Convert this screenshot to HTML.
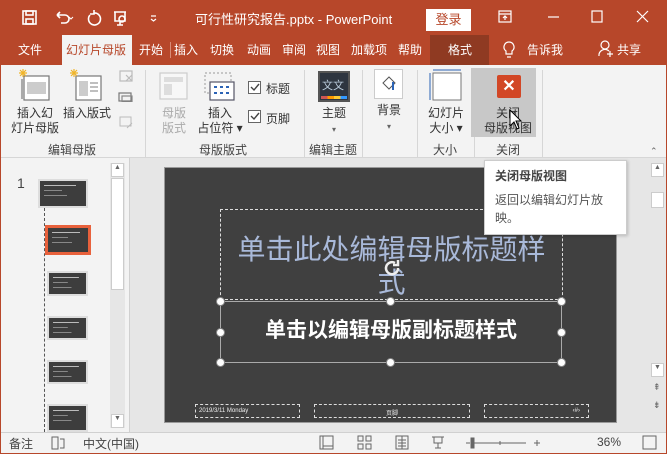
<!DOCTYPE html>
<html><head><meta charset="utf-8"><style>
*{margin:0;padding:0;box-sizing:border-box}
body{width:667px;height:454px;overflow:hidden;font-family:"Liberation Sans","Noto Sans CJK SC",sans-serif;font-size:12px;color:#333;background:#b7472a;position:relative}
.a{position:absolute}
.t{white-space:nowrap}
.w{color:#fff}
.tab{position:absolute;top:41px;color:#fff;font-size:12px}
.sep{position:absolute;top:70px;width:1px;height:88px;background:#d6d6d6}
.gl{position:absolute;top:141px;font-size:12px;color:#444;transform:translateX(-50%)}
.bt{position:absolute;font-size:12px;color:#333;text-align:center;line-height:15px;transform:translateX(-50%)}
.h{position:absolute;width:9px;height:9px;border-radius:50%;background:#fff;border:1px solid #888}
.th{position:absolute;background:#3d3d3d;border:2px solid #ddd;background-image:linear-gradient(#bbb,#bbb),linear-gradient(#888,#888),linear-gradient(#888,#888);background-size:70% 1px,40% 1px,50% 1px;background-position:4px 4px,4px 9px,4px 14px;background-repeat:no-repeat}
</style></head><body>
<svg class="a" style="left:22px;top:9px" width="140" height="18" viewBox="0 0 140 18" fill="none" stroke="#fff" stroke-width="1.6">
<rect x="1" y="2" width="13" height="13"/><rect x="4" y="2" width="7" height="4"/><rect x="4" y="10" width="7" height="5"/>
<path d="M35 6h8a4 4 0 0 1 0 8h-4M35 6l3-3M35 6l3 3"/><path d="M47 8l2 2 2-2" stroke-width="1"/>
<path d="M72 4a6 6 0 1 1-4 2M72 1v4h-4"/>
<path d="M92 3h12M93 3v9h10V3M98 12v4M95 16h6"/><circle cx="100" cy="10" r="3"/>
<path d="M129 7h5M129 10l2.5 2 2.5-2" stroke-width="1.2"/></svg>
<div class="a t w" style="left:195px;top:9px;font-size:13px">可行性研究报告.pptx - PowerPoint</div>
<div class="a t" style="left:426px;top:9px;width:45px;height:22px;background:#fff;color:#b7472a;font-size:13px;text-align:center;line-height:22px">登录</div>
<svg class="a" style="left:498px;top:9px" width="160" height="16" fill="none" stroke="#fff" stroke-width="1.2">
<rect x="1" y="2" width="12" height="11"/><path d="M1 5h12M7 7v4M5 9l2-2 2 2"/>
<path d="M50 8h11"/><rect x="94" y="2" width="10" height="11"/><path d="M139 2l11 11M150 2l-11 11"/></svg>
<div class="tab" style="left:18px">文件</div>
<div class="a" style="left:62px;top:35px;width:70px;height:30px;background:#f3f3f3"></div>
<div class="tab" style="left:66px;color:#b7472a">幻灯片母版</div>
<div class="tab" style="left:139px">开始</div><div class="tab" style="left:174px">插入</div><div class="tab" style="left:210px">切换</div><div class="tab" style="left:247px">动画</div><div class="tab" style="left:282px">审阅</div><div class="tab" style="left:316px">视图</div><div class="tab" style="left:351px">加载项</div><div class="tab" style="left:398px">帮助</div>
<div class="a" style="left:170px;top:42px;width:1px;height:16px;background:#d98c77"></div>
<div class="a" style="left:430px;top:35px;width:59px;height:30px;background:#8f3a22"></div>
<div class="tab" style="left:448px">格式</div>
<svg class="a" style="left:502px;top:40px" width="14" height="20" fill="none" stroke="#fff" stroke-width="1.2"><path d="M7 2a5 5 0 0 0-3 9v3h6v-3a5 5 0 0 0-3-9zM5 17h4"/></svg>
<div class="tab" style="left:527px">告诉我</div>
<svg class="a" style="left:598px;top:40px" width="16" height="18" fill="none" stroke="#fff" stroke-width="1.2"><circle cx="7" cy="5" r="4"/><path d="M1 16a6 6 0 0 1 10-5M12 11v6M9 14h6"/></svg>
<div class="tab" style="left:617px">共享</div>
<div class="a" style="left:1px;top:65px;width:665px;height:93px;background:#f3f3f3"></div>
<div class="a" style="left:1px;top:157px;width:665px;height:1px;background:#d6d6d6"></div>
<div class="sep" style="left:145px"></div><div class="sep" style="left:304px"></div><div class="sep" style="left:362px"></div><div class="sep" style="left:417px"></div><div class="sep" style="left:474px"></div><div class="sep" style="left:542px"></div>
<svg class="a" style="left:18px;top:68px" width="120" height="34" fill="none" stroke-width="1.2">
<rect x="6" y="8" width="25" height="24" fill="#fff" stroke="#777"/><rect x="9" y="14" width="19" height="12" fill="#ccc" stroke="none"/><rect x="3" y="11" width="2" height="20" fill="#aaa" stroke="none"/>
<path d="M5 1v8M1 5h8M2 2l6 6M8 2l-6 6" stroke="#f0b429"/>
<rect x="58" y="8" width="25" height="24" fill="#fff" stroke="#777"/><rect x="61" y="13" width="9" height="15" fill="#ccc" stroke="none"/><path d="M72 15h8M72 19h8M72 23h8" stroke="#999"/>
<path d="M56 1v8M52 5h8M53 2l6 6M59 2l-6 6" stroke="#f0b429"/>
<rect x="102" y="3" width="12" height="10" stroke="#bbb"/><path d="M108 7l6 6M114 7l-6 6" stroke="#bbb"/>
<rect x="101" y="25" width="12" height="8" stroke="#777"/><rect x="104" y="28" width="10" height="6" stroke="#888"/></svg>
<svg class="a" style="left:119px;top:116px" width="16" height="14" fill="none" stroke="#bbb"><rect x="1" y="1" width="11" height="9"/><path d="M8 12l5-5"/></svg>
<div class="bt" style="left:35px;top:106px">插入幻<br>灯片母版</div>
<div class="bt" style="left:87px;top:106px">插入版式</div>
<div class="gl" style="left:72px">编辑母版</div>
<svg class="a" style="left:158px;top:72px" width="80" height="32" fill="none" stroke-width="1.2">
<rect x="2" y="1" width="27" height="26" fill="#f7f7f7" stroke="#ccc"/><rect x="6" y="5" width="19" height="5" fill="#ddd" stroke="none"/><rect x="6" y="12" width="8" height="11" fill="#ddd" stroke="none"/>
<rect x="47" y="1" width="26" height="20" stroke="#aaa" stroke-dasharray="2 2"/><rect x="52" y="10" width="24" height="18" fill="#fff" stroke="#556"/>
<path d="M56 15h3M62 15h3M68 15h3M56 21h3M62 21h3M68 21h3" stroke="#2b63b6" stroke-width="2"/></svg>
<div class="bt" style="left:174px;top:106px;color:#aaa">母版<br>版式</div>
<div class="bt" style="left:220px;top:106px">插入<br>占位符 ▾</div>
<svg class="a" style="left:247px;top:80px" width="16" height="44" fill="#fff" stroke="#666"><rect x="1.5" y="1.5" width="12" height="12"/><rect x="1.5" y="30.5" width="12" height="12"/><path d="M4 7l3 3 5-6M4 36l3 3 5-6" fill="none" stroke="#444" stroke-width="1.4"/></svg>
<div class="a t" style="left:266px;top:80px">标题</div><div class="a t" style="left:266px;top:110px">页脚</div>
<div class="gl" style="left:223px">母版版式</div>
<div class="a" style="left:318px;top:71px;width:32px;height:31px;background:#2e3540;border:2px solid #555"></div>
<div class="a t" style="left:322px;top:77px;color:#bcd;font-size:11px">文文</div>
<div class="a" style="left:321px;top:96px;width:26px;height:3px;background:linear-gradient(90deg,#c55 25%,#f90 25% 50%,#fc3 50% 75%,#39f 75%)"></div>
<div class="bt" style="left:334px;top:106px">主题<br><span style="font-size:8px;color:#666">▾</span></div>
<div class="gl" style="left:333px">编辑主题</div>
<div class="a" style="left:374px;top:69px;width:29px;height:30px;background:#fff;border:1px solid #ccc"></div>
<svg class="a" style="left:380px;top:74px" width="18" height="20" fill="none" stroke="#555"><path d="M3 9l6-6 6 6-6 6z"/><path d="M13 8v8" stroke="#2b63b6" stroke-width="2"/></svg>
<div class="bt" style="left:389px;top:103px">背景<br><span style="font-size:8px;color:#666">▾</span></div>
<svg class="a" style="left:428px;top:68px" width="38" height="34" fill="none"><rect x="5" y="5" width="28" height="27" fill="#fff" stroke="#777"/><path d="M5 2h28M2 5v27" stroke="#2b63b6"/></svg>
<div class="bt" style="left:446px;top:106px">幻灯片<br>大小 ▾</div>
<div class="gl" style="left:445px">大小</div>
<div class="a" style="left:471px;top:68px;width:65px;height:69px;background:#c8c8c8"></div>
<div class="a" style="left:497px;top:75px;width:24px;height:23px;background:#d24726;border-radius:2px;color:#fff;font-weight:bold;font-size:16px;text-align:center;line-height:23px">✕</div>
<div class="bt" style="left:508px;top:106px">关闭<br>母版视图</div>
<svg class="a" style="left:509px;top:109px" width="14" height="22"><path d="M1 1v16l4-4 3 7 2-1-3-7h5z" fill="#fff" stroke="#000"/></svg>
<div class="gl" style="left:508px">关闭</div>
<div class="a" style="left:650px;top:146px;font-size:9px;color:#666">⌃</div>
<div class="a" style="left:1px;top:158px;width:665px;height:274px;background:#e6e6e6"></div>
<div class="a" style="left:1px;top:158px;width:128px;height:274px;background:#f3f3f3"></div>
<div class="a" style="left:129px;top:158px;width:1px;height:274px;background:#d0d0d0"></div>
<div class="a" style="left:17px;top:175px;font-size:14px;color:#444">1</div>
<div class="a" style="left:44px;top:208px;height:224px;border-left:1px dashed #555"></div>
<div class="th" style="left:38px;top:179px;width:50px;height:29px"></div>
<div class="th" style="left:45px;top:225px;width:46px;height:30px;border:3px solid #e8613c"></div>
<div class="th" style="left:47px;top:271px;width:41px;height:25px"></div>
<div class="th" style="left:47px;top:316px;width:41px;height:24px"></div>
<div class="th" style="left:47px;top:360px;width:41px;height:24px"></div>
<div class="th" style="left:47px;top:404px;width:41px;height:28px"></div>
<div class="a" style="left:110px;top:163px;width:15px;height:265px;background:#e6e6e6"></div>
<div class="a" style="left:111px;top:163px;width:13px;height:14px;background:#fff;border:1px solid #ccc;font-size:7px;text-align:center;color:#666">▲</div>
<div class="a" style="left:111px;top:178px;width:13px;height:112px;background:#fff;border:1px solid #ccc"></div>
<div class="a" style="left:111px;top:414px;width:13px;height:14px;background:#fff;border:1px solid #ccc;font-size:7px;text-align:center;color:#666">▼</div>
<div class="a" style="left:164px;top:167px;width:453px;height:256px;background:#404040;border:1px solid #999"></div>
<div class="a" style="left:220px;top:209px;width:343px;height:91px;border:1px dashed #ddd"></div>
<div class="a t" style="left:220px;top:233px;width:343px;text-align:center;color:#a9b9d9;font-size:28px;line-height:33px">单击此处编辑母版标题样<br>式</div>
<div class="a" style="left:220px;top:301px;width:342px;height:62px;border:1px solid #aaa"></div>
<div class="a t" style="left:220px;top:314px;width:342px;text-align:center;color:#fff;font-size:21px;font-weight:bold">单击以编辑母版副标题样式</div>
<div class="h" style="left:216px;top:297px"></div><div class="h" style="left:386px;top:297px"></div><div class="h" style="left:557px;top:297px"></div>
<div class="h" style="left:216px;top:328px"></div><div class="h" style="left:557px;top:328px"></div>
<div class="h" style="left:216px;top:358px"></div><div class="h" style="left:386px;top:358px"></div><div class="h" style="left:557px;top:358px"></div>
<svg class="a" style="left:381px;top:257px" width="22" height="22" fill="none" stroke="#eee" stroke-width="2.5"><path d="M17 11a6 6 0 1 1-3-5M17 3v5h-5"/></svg>
<div class="a" style="left:195px;top:404px;width:105px;height:14px;border:1px dashed #ddd;color:#eee;font-size:6px;padding:3px 3px">2019/3/11 Monday</div>
<div class="a" style="left:314px;top:404px;width:156px;height:14px;border:1px dashed #ddd;color:#eee;font-size:6px;text-align:center;padding-top:3px">页脚</div>
<div class="a" style="left:484px;top:404px;width:105px;height:14px;border:1px dashed #ddd;color:#eee;font-size:6px;text-align:right;padding:3px 8px">‹#›</div>
<div class="a" style="left:484px;top:160px;width:143px;height:75px;background:#fff;border:1px solid #ccc;box-shadow:1px 1px 3px rgba(0,0,0,.2)"></div>
<div class="a t" style="left:495px;top:167px;font-weight:bold;color:#444">关闭母版视图</div>
<div class="a" style="left:495px;top:191px;width:125px;line-height:18px;color:#555">返回以编辑幻灯片放映。</div>
<div class="a" style="left:650px;top:163px;width:15px;height:214px;background:#e6e6e6"></div>
<div class="a" style="left:651px;top:163px;width:13px;height:14px;background:#fff;border:1px solid #ccc;font-size:7px;text-align:center;color:#666">▲</div>
<div class="a" style="left:651px;top:192px;width:13px;height:16px;background:#fff;border:1px solid #ccc"></div>
<div class="a" style="left:651px;top:363px;width:13px;height:14px;background:#fff;border:1px solid #ccc;font-size:7px;text-align:center;color:#666">▼</div>
<div class="a" style="left:653px;top:382px;font-size:9px;color:#666">⇞</div>
<div class="a" style="left:653px;top:400px;font-size:9px;color:#666">⇟</div>
<div class="a" style="left:1px;top:432px;width:665px;height:21px;background:#f3f3f3;border-top:1px solid #d0d0d0"></div>
<div class="a t" style="left:9px;top:435px;color:#444">备注</div>
<svg class="a" style="left:51px;top:436px" width="16" height="14" fill="none" stroke="#666"><rect x="1" y="1" width="6" height="12"/><path d="M9 3h4v9h-4"/></svg>
<div class="a t" style="left:83px;top:435px;color:#444">中文(中国)</div>
<svg class="a" style="left:318px;top:435px" width="340" height="16" fill="none" stroke="#666">
<rect x="2" y="1" width="13" height="13"/><path d="M5 1v13M5 11h10"/>
<rect x="40" y="1" width="5" height="5"/><rect x="48" y="1" width="5" height="5"/><rect x="40" y="9" width="5" height="5"/><rect x="48" y="9" width="5" height="5"/>
<rect x="78" y="1" width="12" height="13"/><path d="M84 1v13M80 5h8M80 8h8M80 11h8"/>
<path d="M114 2h12M116 2v6h8V2M120 8v5M117 13h6"/>
<path d="M148 8h4M156 8h52M216 8h6M219 5v6"/><rect x="153" y="3" width="3" height="10" fill="#666"/><path d="M182 6v4"/>
<rect x="325" y="1" width="13" height="13"/></svg>
<div class="a t" style="left:597px;top:435px;color:#444">36%</div>
</body></html>
